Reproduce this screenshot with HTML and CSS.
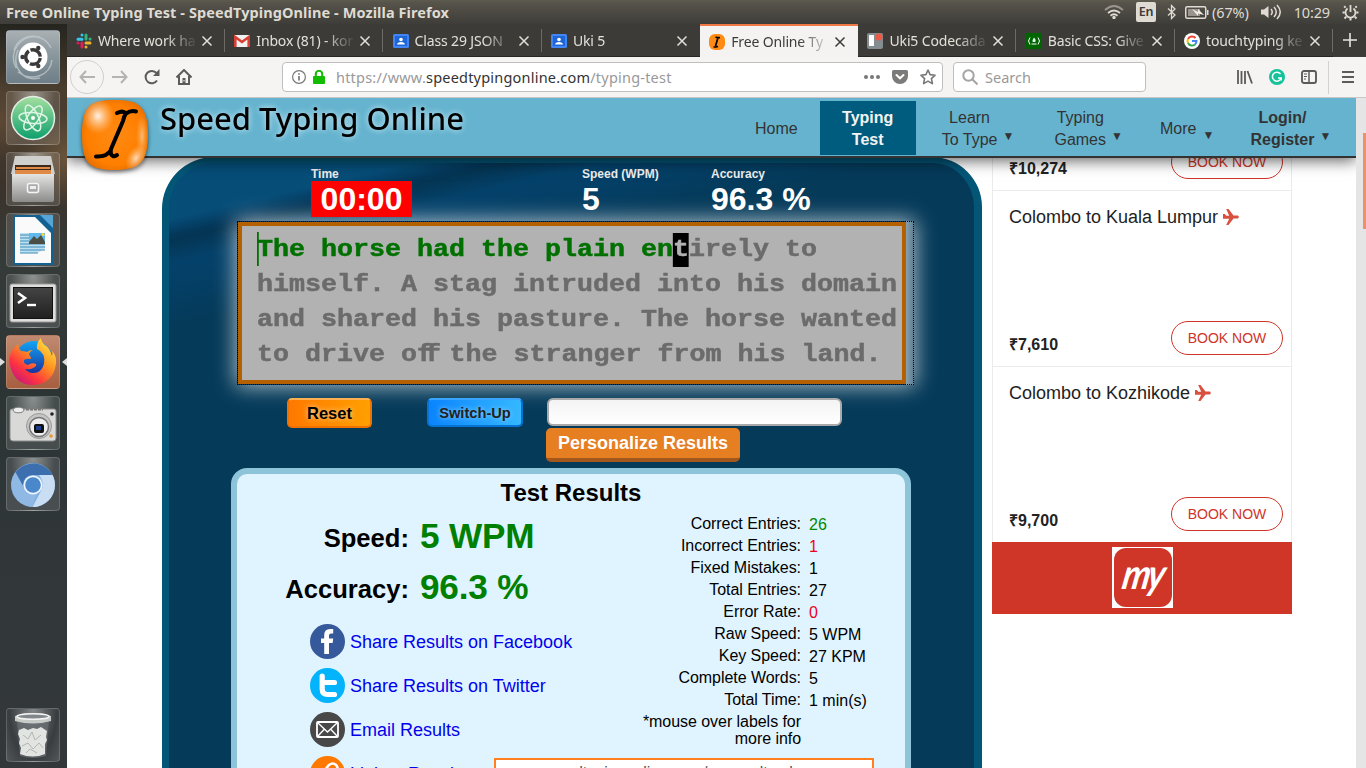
FILE: index.html
```html
<!DOCTYPE html>
<html lang="en">
<head>
<meta charset="utf-8">
<title>Free Online Typing Test - SpeedTypingOnline</title>
<link rel="stylesheet" href="styles.css">
</head>
<body>
<svg width="0" height="0" class="defs">
  <defs>
    <radialGradient id="orb" cx=".5" cy=".5" r=".6"><stop offset="0" stop-color="#ff8a14"/><stop offset=".7" stop-color="#ff7f00"/><stop offset="1" stop-color="#e06c00"/></radialGradient>
    <radialGradient id="shine"><stop offset="0" stop-color="#fff" stop-opacity=".9"/><stop offset="1" stop-color="#ffd0a0" stop-opacity="0"/></radialGradient>
    <linearGradient id="atom" x2="0" y2="1"><stop offset="0" stop-color="#a5dfa0"/><stop offset="1" stop-color="#0d9f6b"/></linearGradient>
    <linearGradient id="steel" x2="0" y2="1"><stop offset="0" stop-color="#e4e4e2"/><stop offset="1" stop-color="#8c8c8a"/></linearGradient>
    <linearGradient id="fire" x1=".9" y1="0" x2=".1" y2="1"><stop offset="0" stop-color="#fff14a"/><stop offset=".4" stop-color="#ff9320"/><stop offset=".7" stop-color="#ff3440"/><stop offset="1" stop-color="#b5108c"/></linearGradient>
    <linearGradient id="globe" x2="0" y2="1"><stop offset="0" stop-color="#10a5f5"/><stop offset="1" stop-color="#1b1f8f"/></linearGradient>
    <linearGradient id="term" x2="0" y2="1"><stop offset="0" stop-color="#444"/><stop offset="1" stop-color="#202020"/></linearGradient>
    <symbol id="x" viewBox="0 0 12 12"><path d="M1.500 1.500l9 9M10.500 1.500l-9 9" stroke="currentColor" stroke-width="1.500" fill="none"/></symbol>
    <symbol id="contact" viewBox="0 0 16 14"><rect width="16" height="14" rx="1.500" fill="#4285f4"/><rect x="2" y="2" width="12" height="10" fill="#1e66d6"/><circle cx="8" cy="5.500" r="1.800" fill="#fff"/><path d="M4 10.500c0-3.500 8-3.500 8 0z" fill="#fff"/></symbol>
    <symbol id="plane" viewBox="0 0 16 16"><path d="M0 5h1.800l1.500 1.700H6.200L3.200 0H5.500l5 6.500H15q1.500 1.500 0 3h-4.500L5.500 16H3.200L6.200 9.700H0z" fill="#d9503f"/></symbol>
  </defs>
</svg>
<div class="screen">
  <div class="sysbar">
    <span class="wintitle">Free Online Typing Test - SpeedTypingOnline - Mozilla Firefox</span>
    <div class="tray">
      <svg class="t-wifi" width="20" height="14" viewBox="0 0 20 14" fill="none" stroke="#dfdbd2" stroke-width="1.800"><path d="M1 5q9-8 18 0" stroke="#9a968d"/><path d="M4 8q6-5 12 0M6.500 10.700q3.500-3 7 0"/><circle cx="10" cy="12.500" r=".8" fill="#dfdbd2"/></svg>
      <span class="lang">En</span>
      <svg class="t-bt" width="10" height="16" viewBox="0 0 10 16" fill="none" stroke="#dfdbd2" stroke-width="1.300"><path d="M1 4.500l7 6.500-3.500 3.500v-13L8 5l-7 6.500"/></svg>
      <svg class="t-bat" width="24" height="13" viewBox="0 0 24 13"><rect x=".75" y=".75" width="20" height="11.500" rx="1.500" fill="none" stroke="#dfdbd2" stroke-width="1.500"/><rect x="3" y="3" width="12" height="7" fill="#99958c"/><path d="M22 4h1.500v5H22z" fill="#dfdbd2"/><path d="M7 3l6 3V3l6 6-6-1.500V10z" fill="#efece5"/></svg>
      <span>(67%)</span>
      <svg class="t-vol" width="21" height="16" viewBox="0 0 21 16"><path d="M0 5.500h3L7.500 2v12L3 10.500H0z" fill="#dfdbd2"/><path d="M10 5q2.500 3 0 6M13 3q4.500 5 0 10M16 1q6.500 7 0 14" fill="none" stroke="#dfdbd2" stroke-width="1.500"/></svg>
      <span>10:29</span>
      <svg class="t-gear" width="17" height="17" viewBox="0 0 17 17" fill="none" stroke="#dfdbd2"><path d="M5.600 4.500a5 5 0 1 0 5.800 0" stroke-width="1.800"/><path d="M8.500 1v7" stroke-width="1.800"/><path d="M3.600 3.600L2.200 2.200M13.400 3.600l1.400-1.400M2.800 8.500H.5M14.200 8.500h2.300M4.200 12.800l-1.700 1.700M12.800 12.800l1.700 1.700M8.500 14v2.500" stroke-width="2"/></svg>
    </div>
  </div>
  <div class="desk">
    <nav class="dock">
      <div class="app silver"><svg viewBox="0 0 54 54"><path d="M8 20C14 2 38 2 45 18M10 38C2 22 14 4 34 7M34 48C16 52 5 36 12 20M46 30C44 46 26 52 12 42" fill="none" stroke="#c4cdd1" stroke-width="1.500" opacity=".7"/><circle cx="27" cy="27" r="14.500" fill="#fff"/><circle cx="27" cy="27" r="7.300" fill="none" stroke="#3a3a3a" stroke-width="3.400" stroke-dasharray="13.500 1.800" stroke-dashoffset="-1"/><g fill="#3a3a3a"><circle cx="16.500" cy="27" r="2.200"/><circle cx="32.300" cy="18" r="2.200"/><circle cx="32.300" cy="36" r="2.200"/></g></svg></div>
      <div class="app"><svg viewBox="0 0 54 54"><circle cx="27" cy="27" r="21.500" fill="url(#atom)" stroke="#e3eee8" stroke-width="1.500"/><g fill="none" stroke="#dff5e7" stroke-width="1.500"><ellipse cx="27" cy="27" rx="5.500" ry="14" transform="rotate(-25 27 27)"/><ellipse cx="27" cy="27" rx="5.500" ry="14" transform="rotate(35 27 27)"/><ellipse cx="27" cy="27" rx="5.500" ry="14" transform="rotate(95 27 27)"/></g><circle cx="27" cy="27" r="2" fill="#fff"/></svg></div>
      <div class="app"><svg viewBox="0 0 54 54"><path d="M9 4h36l4 18H5z" fill="#cfcfcd"/><path d="M9 13h36v10H9z" fill="#3e2a1c"/><path d="M10 15h34v2H10zM9 18h36v4H9z" fill="#e08a45"/><path d="M6 22h42v26q0 2-2 2H8q-2 0-2-2z" fill="url(#steel)"/><rect x="21.500" y="31.500" width="11" height="9" rx="2" fill="#aaa" stroke="#f5f5f5" stroke-width="1.500"/><rect x="24" y="34" width="6" height="3" fill="#eee"/></svg></div>
      <div class="app"><svg viewBox="0 0 54 54"><path d="M7 2h40v50H7z" fill="#136092"/><path d="M34 2h13v13z" fill="#55a6d6"/><path d="M9 4h20l16 16v30H9z" fill="#fafafa"/><path d="M14 20h25v16l-8 4H14z" fill="#bfe0f0"/><path d="M14 22h9M14 25h9M14 28h9M14 31h25M14 34h25M14 37h25M14 40h18" stroke="#3e8db8" stroke-width="1.200"/><path d="M23 20h16v10H23z" fill="#62b8ea"/><path d="M23 29l5-6 3 3 4-4 4 7v2H23z" fill="#4b4f44"/><circle cx="37" cy="21.500" r="1.500" fill="#ffd834"/></svg></div>
      <div class="app"><svg viewBox="0 0 54 54"><rect x="4" y="10" width="46" height="38" rx="2" fill="#dededc" stroke="#999"/><rect x="7.500" y="13.500" width="39" height="31" fill="url(#term)" stroke="#111"/><path d="M12 19l7 5-7 5" fill="none" stroke="#fff" stroke-width="2.600"/><path d="M21 31h9" stroke="#fff" stroke-width="2.400"/></svg></div>
      <div class="app active"><svg viewBox="0 0 54 54"><circle cx="28" cy="25" r="19" fill="url(#globe)"/><path d="M35 3q-5 5-4 11 9 4 7 15-3 10-12 9-5-1-7-4 5 1 8-1 4-2 3-4-4-2-8 1-5-1-4-5 3-2 7-1 0-3-2-4 0-3 4-5-4 0-6 2-3-1-6-1-3-3-3-7Q1 18 4 31q5 19 23 19 20-1 23-21 1-8-4-13 1 3 0 5-2-8-7-11-4-3-4-7z" fill="url(#fire)"/></svg></div>
      <div class="app"><svg viewBox="0 0 54 54"><path d="M6 13h42q2 0 2 2v27q0 3-3 3H7q-3 0-3-3V15q0-2 2-2z" fill="#d9d9d8" stroke="#8b8b8b"/><ellipse cx="12.500" cy="14" rx="5.500" ry="2.800" fill="#eee" stroke="#777"/><path d="M20 13.500h17" stroke="#777" stroke-width="2" stroke-dasharray="3 1"/><circle cx="33" cy="30" r="12.500" fill="#c5c5c5" stroke="#999"/><circle cx="33" cy="31" r="9.500" fill="#eee" stroke="#777" stroke-width="1.500"/><rect x="28" y="28" width="10" height="9" rx="2" fill="#111"/><rect x="30" y="30" width="5" height="4" fill="#1d3f8c"/><circle cx="46" cy="18" r="1.800" fill="#222"/><circle cx="45" cy="40" r="1.800" fill="#e79a2c"/></svg></div>
      <div class="app"><svg viewBox="0 0 54 54"><circle cx="27" cy="28" r="22" fill="#7faee0"/><path d="M9.500 15.500a22 22 0 0 1 37 2.500H27a10 10 0 0 0-10 11z" fill="#3d6fae"/><path d="M46.500 18a22 22 0 0 1-20 32L36 32q2-8-3-14z" fill="#c9def2"/><path d="M9.500 15.500L18 31q4 7 13 6l-5 13A22 22 0 0 1 9.500 15.500" fill="#8fb8e4"/><circle cx="27" cy="28" r="9.500" fill="#eef5fc"/><circle cx="27" cy="28" r="7.800" fill="#4a87cb"/></svg></div>
      <div class="app trash"><svg viewBox="0 0 54 54"><path d="M11 12h32l-3 36q-13 4-26 0z" fill="#6a7073" opacity=".7"/><path d="M13 22l5-2 4 2 5-2 4 1 4-2 6 4-1 6 1 3-2 4v10q-12 5-25 0l1-6-2-5 1-4-2-5z" fill="#e1e4e1"/><path d="M17 27l5 4 4-7 3 8 6-5M16 38l6-3 5 6 6-6 4 5M20 45l4-4 7 4" stroke="#b1b7b2" fill="none"/><path d="M9 8q18-6 36 0v5q-18 5-36 0z" fill="#c9cbc9"/><ellipse cx="27" cy="8.500" rx="16" ry="2.800" fill="#81878a" stroke="#f3f3f3" stroke-width="1.500"/></svg></div>
    </nav>
    <main class="browser">
      <div class="tabs">
        <div class="tab"><svg class="fav" viewBox="0 0 16 16" stroke-width="3" stroke-linecap="round" fill="none"><path d="M2 6.200h4M6 2v.1" stroke="#36c5f0"/><path d="M10 2v4M14 6h.1" stroke="#2eb67d"/><path d="M10 10h4M10 14v.1" stroke="#ecb22e"/><path d="M6 10v4M2 10h.1" stroke="#e01e5a"/></svg><span class="lbl">Where work ha</span><svg class="close"><use href="#x"/></svg></div>
        <div class="tab"><svg class="fav" viewBox="0 0 16 16"><path d="M1 2h14q1 0 1 1v11H0V3q0-1 1-1z" fill="#f2f2f2"/><path d="M1.300 14V4L8 9l6.700-5v10" fill="none" stroke="#d93f32" stroke-width="2.600"/></svg><span class="lbl">Inbox (81) - kor</span><svg class="close"><use href="#x"/></svg></div>
        <div class="tab"><svg class="fav"><use href="#contact" y="1" height="14"/></svg><span class="lbl">Class 29 JSON</span><svg class="close"><use href="#x"/></svg></div>
        <div class="tab nodiv"><svg class="fav"><use href="#contact" y="1" height="14"/></svg><span class="lbl">Uki 5</span><svg class="close"><use href="#x"/></svg></div>
        <div class="tab current"><svg class="fav" viewBox="0 0 16 16"><rect width="16" height="16" rx="6" fill="#ff8a14"/><path d="M6.500 3q2 1 4.500.500M9 3.500L6.500 12M4.500 13q2.500 0 4.500-.500" fill="none" stroke="#000" stroke-width="1.700"/></svg><span class="lbl">Free Online Ty</span><svg class="close"><use href="#x"/></svg></div>
        <div class="tab"><svg class="fav" viewBox="0 0 16 16"><rect width="16" height="16" rx="2" fill="#838c91"/><rect x="2" y="2" width="5" height="11" rx=".5" fill="#fff"/><circle cx="12" cy="4" r="3.500" fill="#eb5a46"/></svg><span class="lbl">Uki5 Codecada</span><svg class="close"><use href="#x"/></svg></div>
        <div class="tab"><svg class="fav" viewBox="0 0 16 16"><path d="M0 0h16v16H0z" fill="#006400"/><path d="M4 4.500q-3 3.500 0 7M12 4.500q3 3.500 0 7" fill="none" stroke="#fff"/><path d="M8 4.500q2.500 2.500 1.200 4.500H6.800Q5.800 7.500 8 4.500z" fill="#dfe"/><path d="M5.500 11h5" stroke="#fff"/></svg><span class="lbl">Basic CSS: Give</span><svg class="close"><use href="#x"/></svg></div>
        <div class="tab"><svg class="fav" viewBox="0 0 16 16" fill="none" stroke-width="2"><circle cx="8" cy="8" r="8" fill="#fff"/><path d="M11.500 5A4.500 4.500 0 0 0 4 6" stroke="#ea4335"/><path d="M4 6a4.500 4.500 0 0 0 0 4" stroke="#fbbc05"/><path d="M4 10a4.500 4.500 0 0 0 7 1.500" stroke="#34a853"/><path d="M11 11.500A4.500 4.500 0 0 0 12.500 8H8" stroke="#4285f4"/></svg><span class="lbl">touchtyping ke</span><svg class="close"><use href="#x"/></svg></div>
        <svg class="plus" width="14" height="14" viewBox="0 0 14 14"><path d="M7 0v14M0 7h14" stroke="#e8e6e1" stroke-width="1.600"/></svg>
      </div>
      <div class="toolbar">
        <span class="back"><svg width="16" height="14" viewBox="0 0 16 14"><path d="M16 7H1.500M7 1L1.500 7 7 13" fill="none" stroke="#b4b3b1" stroke-width="2"/></svg></span>
        <svg class="fwd" width="16" height="14" viewBox="0 0 16 14"><path d="M0 7h14.500M9 1l5.500 6L9 13" fill="none" stroke="#b4b3b1" stroke-width="2"/></svg>
        <svg class="reload" width="16" height="16" viewBox="0 0 16 16"><path d="M13 11.500A6.200 6.200 0 1 1 12.500 4" fill="none" stroke="#5c5b59" stroke-width="2"/><path d="M15.500 0v7H9z" fill="#5c5b59"/></svg>
        <svg class="home" width="16" height="16" viewBox="0 0 16 16"><path d="M.5 8.500L8 1l7.500 7.500M3 7v8h10V7" fill="none" stroke="#5c5b59" stroke-width="2"/><path d="M6.500 9h3v6h-3z" fill="#5c5b59"/><path d="M8 11v1.500" stroke="#fff"/></svg>
        <div class="urlbar">
          <svg width="14" height="14" viewBox="0 0 14 14"><circle cx="7" cy="7" r="6.400" fill="none" stroke="#777" stroke-width="1.200"/><path d="M7 6v4.500M7 3.300v1.500" stroke="#777" stroke-width="1.700"/></svg>
          <svg class="lock" width="12" height="14" viewBox="0 0 12 14"><rect y="6" width="12" height="8" rx="1" fill="#12bc00"/><path d="M2.800 7V4a3.200 3.200 0 0 1 6.400 0v3" fill="none" stroke="#12bc00" stroke-width="2"/></svg>
          <span class="url">https://www.<b>speedtypingonline.com</b>/typing-test</span>
          <svg class="dots" width="16" height="4" viewBox="0 0 16 4" fill="#777"><circle cx="2" cy="2" r="2"/><circle cx="8" cy="2" r="2"/><circle cx="14" cy="2" r="2"/></svg>
          <svg class="pocket" width="16" height="14" viewBox="0 0 16 14"><path d="M1.500 0h13Q16 0 16 1.500V6A8 8 0 0 1 0 6V1.500Q0 0 1.500 0z" fill="#7c7b7a"/><path d="M4.500 5L8 8.300 11.500 5" fill="none" stroke="#fff" stroke-width="2" stroke-linecap="round"/></svg>
          <svg class="star" width="16" height="16" viewBox="0 0 16 16"><path d="M8 1l2.100 4.600 5 .6-3.700 3.400 1 5L8 12.100l-4.400 2.500 1-5L.9 6.200l5-.6z" fill="none" stroke="#777" stroke-width="1.600" stroke-linejoin="round"/></svg>
        </div>
        <div class="search"><svg width="16" height="16" viewBox="0 0 16 16" fill="none" stroke="#a5a4a3" stroke-width="2"><circle cx="6.500" cy="6.500" r="5.200"/><path d="M10.300 10.300L15.500 15.500"/></svg><span>Search</span></div>
        <svg class="library" width="16" height="14" viewBox="0 0 16 14" stroke="#5c5b59" stroke-width="1.800"><path d="M1 0v14M4.500 1v13M8 1v13M10.500 1L15 13.500"/></svg>
        <svg class="gram" width="16" height="16" viewBox="0 0 16 16"><circle cx="8" cy="8" r="8" fill="#15c39a"/><path d="M11.500 5A4.500 4.500 0 1 0 12 9.500M9 9h3.200v2.500" fill="none" stroke="#fff" stroke-width="1.500"/></svg>
        <svg class="sidebar" width="16" height="14" viewBox="0 0 16 14" fill="none" stroke="#5c5b59"><rect x="1" y="1" width="14" height="12" rx="2" stroke-width="1.900"/><path d="M8 1v12" stroke-width="1.500"/><path d="M3 4h3M3 6.500h3M3 9h2"/></svg>
        <span class="sep"></span>
        <svg class="menu" width="12" height="12" viewBox="0 0 12 12"><path d="M0 1h12M0 6h12M0 11h12" stroke="#5c5b59" stroke-width="1.800"/></svg>
      </div>
      <div class="viewport">
        <div class="page">
          <header class="site">
            <svg class="orb" width="76" height="80" viewBox="0 0 76 80"><path d="M36 2C60 1 70 8 70 36S62 72 37 72 4 66 4 37 12 2 36 2z" fill="url(#orb)"/><ellipse cx="20" cy="18" rx="16" ry="18" fill="url(#shine)"/><ellipse cx="58" cy="60" rx="9" ry="14" fill="url(#shine)" opacity=".8" transform="rotate(30 58 60)"/><ellipse cx="64" cy="38" rx="6" ry="22" fill="url(#shine)" opacity=".5"/><path d="M39 15Q45 12 48 15.500Q53 12 58 13.500M48 15.500Q46 18 45 23L33 51Q32 57 35 58Q36 59 39 57M33 52Q29 59 18 58.500" fill="none" stroke="#000" stroke-width="4" stroke-linecap="round" stroke-linejoin="round"/></svg>
            <svg class="brand" width="320" height="46"><text x="7" y="31.500" textLength="304" lengthAdjust="spacingAndGlyphs">Speed Typing Online</text></svg>
            <nav class="links">
              <a class="n-home">Home</a>
              <a class="n-active">Typing<br>Test</a>
              <a class="n-learn">Learn<br>To Type</a><i>▼</i>
              <a class="n-games">Typing<br>Games</a><i>▼</i>
              <a class="n-more">More</a><i class="low">▼</i>
              <a class="n-login">Login/<br>Register</a><i>▼</i>
            </nav>
          </header>
          <div class="cols">
            <section class="panel">
              <div class="stats">
                <div class="st-time"><label>Time</label><strong>00:00</strong></div>
                <div class="st-speed"><label>Speed (WPM)</label><strong>5</strong></div>
                <div class="st-acc"><label>Accuracy</label><strong>96.3 %</strong></div>
              </div>
              <div class="typer"><div class="box"><div class="words"><p class="line1"><span class="done">The horse had the plain en</span><span class="cur">t</span>irely to</p><p>himself. A stag intruded into his domain</p><p>and shared his pasture. The horse wanted</p><p>to drive o<span class="lig">ff</span> the stranger from his land.</p></div></div></div>
              <div class="controls">
                <button class="reset">Reset</button>
                <button class="switch">Switch-Up</button>
                <div class="person"><div class="field"></div><button class="personal">Personalize Results</button></div>
              </div>
              <section class="results">
                <h2>Test Results</h2>
                <div class="rcols">
                  <div class="left">
                    <div class="big"><span>Speed:</span><b>5 WPM</b></div>
                    <div class="big second"><span>Accuracy:</span><b>96.3 %</b></div>
                    <ul class="share">
                      <li><svg viewBox="0 0 35 35"><circle cx="17.500" cy="17.500" r="17.500" fill="#35599b"/><path d="M14.200 30V19H11v-4.500h3.200V11q0-6 6-6h3v4.500h-2.200q-2 0-2 2v3h4.200l-.6 4.500h-3.600v11z" fill="#fff"/></svg><a>Share Results on Facebook</a></li>
                      <li><svg viewBox="0 0 35 35"><circle cx="17.500" cy="17.500" r="17.500" fill="#03b3fc"/><path d="M12.200 8v13q0 5.500 5.500 5.500h6.800M12.200 14.500h12.300" fill="none" stroke="#fff" stroke-width="5.200" stroke-linecap="round"/></svg><a>Share Results on Twitter</a></li>
                      <li><svg viewBox="0 0 35 35"><circle cx="17.500" cy="17.500" r="17.500" fill="#484848"/><rect x="7" y="10" width="21" height="15" rx="1" fill="none" stroke="#fff" stroke-width="1.800"/><path d="M8 11l9.500 9 9.500-9M8 24l6.500-7M27 24l-6.500-7" fill="none" stroke="#fff" stroke-width="1.400"/></svg><a>Email Results</a></li>
                      <li><svg viewBox="0 0 35 35"><circle cx="17.500" cy="17.500" r="17.500" fill="#ff7800"/><path d="M14 15l5-6q4-3 7 0t0 7l-5 5" fill="none" stroke="#fff" stroke-width="2.600"/></svg><a>Link to Results</a></li>
                    </ul>
                  </div>
                  <dl class="detail">
                    <dt>Correct Entries:</dt><dd class="g">26</dd>
                    <dt>Incorrect Entries:</dt><dd class="r">1</dd>
                    <dt>Fixed Mistakes:</dt><dd>1</dd>
                    <dt>Total Entries:</dt><dd>27</dd>
                    <dt>Error Rate:</dt><dd class="r">0</dd>
                    <dt>Raw Speed:</dt><dd>5 WPM</dd>
                    <dt>Key Speed:</dt><dd>27 KPM</dd>
                    <dt>Complete Words:</dt><dd>5</dd>
                    <dt>Total Time:</dt><dd>1 min(s)</dd>
                    <dt class="note">*mouse over labels for<br>more info</dt>
                  </dl>
                </div>
                <div class="permalink">www.speedtypingonline.com/myresults.php</div>
              </section>
            </section>
            <aside class="ad">
              <div class="deal first"><b>₹10,274</b><a>BOOK NOW</a></div>
              <div class="deal"><h3>Colombo to Kuala Lumpur <svg width="16" height="16"><use href="#plane"/></svg></h3><b>₹7,610</b><a>BOOK NOW</a></div>
              <div class="deal"><h3>Colombo to Kozhikode <svg width="16" height="16"><use href="#plane"/></svg></h3><b>₹9,700</b><a>BOOK NOW</a></div>
              <div class="foot"><div class="sq"><div class="rd"><span>my</span></div></div></div>
            </aside>
          </div>
        </div>
        <div class="scroll"><div class="thumb"></div></div>
      </div>
    </main>
  </div>
</div>
</body>
</html>
```
FILE: styles.css
```css
* { box-sizing: border-box; }
body { margin: 0; font-family: "Liberation Sans", Arial, sans-serif; }
p, h2, h3, ul, dl, dd { margin: 0; padding: 0; }
svg { display: block; flex: none; }
.defs { position: absolute; }
.screen { width: 1366px; height: 768px; overflow: hidden; display: flex; flex-direction: column; }

/* system bar */
.sysbar { height: 24px; flex: none; display: flex; justify-content: space-between; align-items: center; padding: 0 7px 0 6px; background: linear-gradient(#5e5b50, #57544b 10%, #3e3d39); color: #dfdbd2; font: 14.500px "Noto Sans", sans-serif; }
.wintitle { font-weight: 700; font-size: 14.500px; letter-spacing: .09px; white-space: nowrap; }
.tray { display: flex; align-items: center; white-space: nowrap; letter-spacing: -.15px; }
.lang { background: #dfdbd2; color: #3c3b37; border-radius: 2px; width: 20px; height: 20px; line-height: 20px; text-align: center; margin: 0 11px 0 12px; font-size: 12.500px; font-weight: 600; }
.t-bat { margin: 0 3px 0 8px; }
.t-vol { margin: 0 12px; }
.t-gear { margin-left: 12px; }

.desk { flex: 1; display: flex; min-height: 0; }

/* launcher */
.dock { width: 67px; flex: none; padding: 6px 7px 6px 6px; display: flex; flex-direction: column; gap: 7px; background: radial-gradient(circle at 100% 18%, #6a543a 0, transparent 50px), radial-gradient(circle at 0 13%, #5c4834 0, transparent 40px), linear-gradient(#25251f, #4b3e2f 9%, #3b332b 22%, #353b39 32%, #2c3434 50%, #313739 70%, #333739); }
.app { width: 54px; height: 54px; flex: none; border-radius: 4px; border: 1px solid rgba(255,255,255,.17); background: radial-gradient(ellipse at 50% 0, rgba(255,255,255,.45), rgba(255,255,255,.12) 60%); }
.app svg { width: 54px; height: 54px; margin: -1px; }
.app.silver { background: linear-gradient(#a9b0b3, #87959c 50%, #6f7f87); }
.app.active { background: linear-gradient(#c08a70, #a75f3f); position: relative; }
.app.active::before, .app.active::after { content: ""; position: absolute; top: 22px; border: 4px solid transparent; }
.app.active::before { left: -7px; border-left: 5px solid #ddd; border-right: 0; }
.app.active::after { right: -8px; border-right: 5px solid #ddd; border-left: 0; }
.trash { margin-top: auto; background: radial-gradient(ellipse at 50% 0, rgba(255,255,255,.4), rgba(60,65,68,.6) 65%, rgba(255,255,255,.16)); }

/* browser chrome */
.browser { flex: 1; min-width: 0; display: flex; flex-direction: column; background: #fff; font-family: "Noto Sans", sans-serif; }
.tabs { height: 33px; flex: none; display: flex; background: #3c3b37; }
.tab { width: 158.300px; flex: none; display: flex; align-items: center; padding: 1px 0 0 9px; color: #e3e0d8; font-size: 14px; border-bottom: 1px solid #272622; background: linear-gradient(#6d6b66, #6d6b66) 157px 5px / 1px 23px no-repeat; }
.tab.nodiv { background: none; }
.tab.current { background: #f4f3f1; color: #3c3b37; border-top: 2px solid #f07746; padding-top: 0; border-bottom: 0; }
.fav { width: 16px; height: 16px; }
.lbl { width: 99px; margin: 0 4px 0 6px; white-space: nowrap; letter-spacing: -.15px; -webkit-mask-image: linear-gradient(90deg, #000 68px, transparent 100px); mask-image: linear-gradient(90deg, #000 68px, transparent 100px); }
.close { width: 12px; height: 12px; color: inherit; }
.plus { margin: 9px 0 0 10px; }
.toolbar { height: 41px; flex: none; display: flex; align-items: center; background: #f5f4f2; border-bottom: 1px solid #c8c7c5; padding-left: 3px; font-size: 14.500px; color: #999; }
.back { width: 34px; height: 34px; border: 1px solid #d0cfcd; border-radius: 50%; display: flex; align-items: center; justify-content: center; }
.fwd { margin-left: 8px; }
.reload { margin-left: 16px; }
.home { margin-left: 16px; }
.urlbar, .search { height: 30px; border: 1px solid #c0bfbd; border-radius: 4px; background: #fff; display: flex; align-items: center; flex: none; }
.urlbar { width: 661px; margin-left: 90px; padding-left: 9px; }
.lock { margin-left: 7px; }
.url { margin-left: 11px; flex: 1; letter-spacing: .21px; }
.url b { font-weight: 400; color: #333; }
.pocket { margin: 0 12px; }
.star { margin-right: 6px; }
.search { width: 193px; margin-left: 10px; padding-left: 8px; gap: 7px; }
.library { margin-left: 91px; }
.gram { margin-left: 16px; }
.sidebar { margin-left: 16px; }
.sep { width: 1px; height: 33px; background: #d3d2d0; margin: 0 13px 0 11px; }

/* page */
.viewport { flex: 1; display: flex; min-height: 0; font-family: "Liberation Sans", Arial, sans-serif; }
.page { width: 1289px; overflow: hidden; background: #fff; }
.scroll { width: 10px; background: #e5e5e5; display: flex; justify-content: flex-end; padding-top: 35px; }
.thumb { width: 3px; height: 96px; background: #f09068; }
.site { height: 60px; position: relative; z-index: 2; background: #65b3cf; border-bottom: 2px solid #333; box-shadow: 0 3px 14px 0 rgba(0,0,0,.6); display: flex; }
.orb { position: absolute; left: 11px; top: 0; filter: drop-shadow(0 2px 2px rgba(0,0,0,.6)); }
.brand { margin-left: 86px; font: 500 31px "Noto Sans", sans-serif; filter: drop-shadow(0 0 3px rgba(230,250,255,.85)); }
.links { display: flex; flex: 1; align-items: center; line-height: 22px; font-size: 16px; color: #333; text-align: center; padding-left: 282px; padding-top: 3px; }
.links i { font-style: normal; font-size: 12px; width: 8px; margin: 15px 0 0 7px; display: flex; justify-content: center; }
.links .low { margin-left: 8px; margin-top: 12px; }
.n-active { width: 96px; height: 54px; padding-top: 6px; margin: -2px 26px 0 22px; background: #005c7e; color: #f3f3f3; font-weight: 700; }
.n-games { margin-left: 42px; }
.n-more { margin-left: 39px; }
.n-login { margin-left: 38px; font-weight: 700; }
.cols { display: flex; align-items: flex-start; }
.panel { width: 820px; height: 700px; margin: -1px 10px 0 95px; border: 7px solid #045677; border-right-width: 8px; border-top-width: 6px; border-radius: 52px 50px 0 0; background: linear-gradient(167deg, #064d78 0, #064d78 55px, #04375a 71px, #043553 76px, #04416a 98px, #043f66 120px, #053a59 160px); color: #fff; }
.stats { display: flex; height: 58px; padding-top: 4px; }
.stats label { display: block; font: bold 12px/14px "Liberation Sans", sans-serif; color: #eee; }
.stats strong { display: block; font-size: 32px; line-height: 36px; }
.st-time { margin-left: 142px; width: 271px; }
.st-time strong { width: 101px; background: #f00; text-align: center; }
.st-speed { width: 129px; }
.typer { width: 677px; height: 164px; margin-left: 68px; outline: 1px dotted #000; outline-offset: -1px; padding: 1px; box-shadow: 0 0 20px 1px rgba(255,255,255,.7); background: linear-gradient(90deg, transparent 668px, #8ca6b5 668px, #5c7c90); }
.box { width: 668px; height: 162px; border: 4px solid #b56000; background: #b2b2b2; padding: 6px 0 0 15px; }
.words { font: bold 23.600px/35px "Liberation Mono", monospace; color: #6b6b6b; -webkit-text-stroke: .5px; transform: scaleX(1.130); transform-origin: 0 0; width: 580px; height: 140px; }
.words p { height: 35px; white-space: pre; }
.words .line1 { background: linear-gradient(#007000, #007000) 0 0 / 1.600px 34px no-repeat; }
.done { color: #007000; }
.cur { background: #000; color: #b2b2b2; padding: 3px 0 4px; }
.lig { letter-spacing: -.3em; margin-right: .02em; }
.controls { display: flex; height: 82px; padding: 13px 0 0 118px; align-items: flex-start; }
button { font-family: inherit; font-weight: 700; padding: 0; border: 0; }
.reset { width: 85px; height: 30px; font-size: 16.500px; border-radius: 5px; border: 2px solid #ef7100; border-top-color: #ffb050; background: linear-gradient(90deg, #ff7800, #ffa000); margin-right: 55px; color: #000; text-shadow: 0 0 5px #ffd9a0; }
.switch { width: 96px; height: 29px; font-size: 14.670px; border-radius: 5px; border: 2px solid #0673d5; border-top-color: #3aa4ff; background: linear-gradient(90deg, #0a84ff, #35b8ff); margin-right: 23px; color: #222; text-shadow: 0 0 5px #9bd6ff; }
.field { width: 295px; height: 28px; margin-left: 1px; border: 2px solid #aaa; border-radius: 6px; background: linear-gradient(#f3f3f3, #fff); }
.personal { display: block; margin-top: 2px; width: 194px; height: 34px; border-radius: 5px; border-bottom: 4px solid #a3571a; background: #e67e22; color: #fff; font-size: 18px; padding-top: 1px; }
.results { width: 680px; height: 330px; margin-left: 62px; margin-top: 1px; border: 6px solid #8dc4d9; border-radius: 16px; background: #e0f4ff; color: #000; position: relative; overflow: hidden; }
.results h2 { font-size: 24px; line-height: 28px; text-align: center; padding-top: 5px; height: 37px; }
.rcols { display: flex; height: 247px; }
.left { width: 390px; flex: none; }
.big { display: flex; height: 51px; align-items: baseline; font-size: 25.600px; font-weight: 700; line-height: 50px; white-space: nowrap; }
.big span { width: 172px; text-align: right; position: relative; top: -1px; }
.big b { font-size: 35.200px; letter-spacing: -.2px; color: green; margin-left: 11px; }
.share { list-style: none; padding: 11px 0 0 73px; }
.share li { height: 35px; margin-bottom: 9px; display: flex; align-items: center; gap: 5px; font-size: 18px; color: #00e; }
.share a { margin-top: 1px; }
.share svg { width: 35px; height: 35px; }
.detail { display: grid; grid-template-columns: 174px 1fr; grid-auto-rows: 22px; column-gap: 8px; width: 270px; font-size: 16px; line-height: 22px; white-space: nowrap; padding-top: 2px; }
.detail dt { text-align: right; letter-spacing: -.05px; }
.detail dd { padding-top: 1px; }
.detail .note { line-height: 17px; padding-top: 2px; }
.g { color: #008a00; }
.r { color: #f00020; }
.permalink { width: 380px; height: 32px; margin-left: 257px; border: 2px solid #ff7f1f; background: #fff; color: #555; font-size: 16px; line-height: 25px; padding: 0 5px; }

/* flight deals */
.ad { width: 300px; border: 1px solid #ebebeb; border-width: 0 1px; color: #222; }
.deal { height: 176px; border-bottom: 1px solid #ebebeb; display: grid; grid-template-columns: 1fr 112px; grid-template-rows: 130px 34px; padding: 0 8px 0 16px; }
.deal h3 { grid-column: span 2; font-weight: 400; font-size: 18px; line-height: 20px; padding-top: 16px; display: flex; gap: 5px; }
.deal h3 svg { margin-top: 2px; }
.deal b { font-size: 16px; line-height: 20px; padding-top: 14px; }
.deal a { border: 1px solid #cf3427; border-radius: 17px; color: #cf3427; font-size: 14px; line-height: 32px; text-align: center; }
.deal.first { height: 33px; grid-template-rows: 34px; }
.deal.first b { padding-top: 1px; }
.deal.first a { margin-top: -13px; height: 34px; }
.foot { margin: -1px -1px 0; height: 72px; background: #cf3628; padding: 5px 0 0 120px; position: relative; }
.sq { width: 61px; height: 61px; background: #fff; padding: 1px 1px 1px 2px; }
.rd { width: 58px; height: 59px; border-radius: 12px; background: #cf3628; color: #fff; display: flex; justify-content: center; font: italic 700 42px/50px "Lato", sans-serif; }
.rd span { transform: scaleX(.84) skewX(-12deg); letter-spacing: -3px; }
```
